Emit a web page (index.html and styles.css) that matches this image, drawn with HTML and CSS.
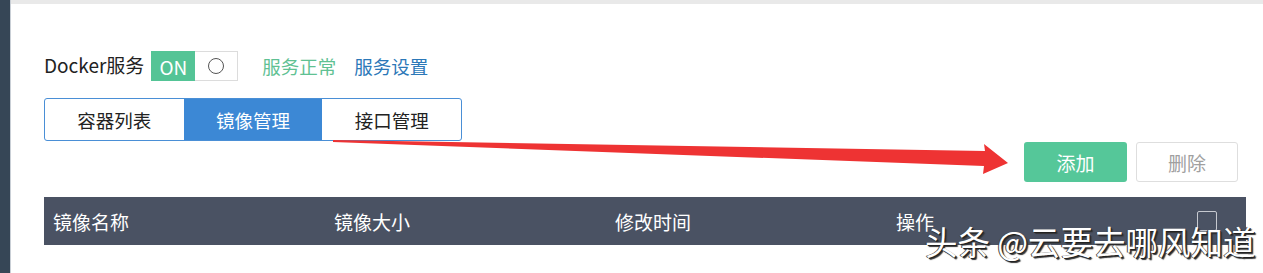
FILE: index.html
```html
<!DOCTYPE html>
<html lang="zh">
<head>
<meta charset="utf-8">
<link rel="stylesheet" href="styles.css">
</head>
<body>
<div class="app">
  <aside class="sidebar"></aside>
  <main class="main">
    <div class="topstrip"></div>
    <div class="content">
      <div class="service-row">
        <span class="label">Docker服务</span>
        <div class="toggle"><span class="on">ON</span><span class="off"><span class="circle"></span></span></div>
        <span class="status">服务正常</span>
        <a class="settings">服务设置</a>
      </div>
      <div class="tabs">
        <div class="tab">容器列表</div>
        <div class="tab active">镜像管理</div>
        <div class="tab">接口管理</div>
      </div>
      <div class="actions">
        <button class="btn btn-add">添加</button>
        <button class="btn btn-del">删除</button>
      </div>
      <div class="thead">
        <div class="th">镜像名称</div>
        <div class="th">镜像大小</div>
        <div class="th">修改时间</div>
        <div class="th">操作</div>
        <div class="th th-check"><span class="checkbox"></span></div>
      </div>
    </div>
  </main>
</div>
<svg class="arrow" width="1263" height="273" viewBox="0 0 1263 273">
  <polygon points="333,140 985,151 984,144 1008,163 983,174 984,166 333,142" fill="#ee3333"/>
</svg>
<div class="watermark">头条 @云要去哪风知道</div>
</body>
</html>
```
FILE: styles.css
```css
html, body {
  margin: 0;
  padding: 0;
  background: #ffffff;
  font-family: "Noto Sans CJK SC", "Noto Sans", sans-serif;
  color: #222;
}
.app {
  display: flex;
  height: 273px;
  overflow: hidden;
}
.sidebar {
  width: 10px;
  flex: none;
  background: #364656;
  border-right: 1px solid #c9cfd6;
}
.main {
  flex: 1;
  display: flex;
  flex-direction: column;
}
.topstrip {
  height: 4px;
  background: #e9e9e9;
}
.content {
  padding: 47px 17px 0 33px;
  display: flex;
  flex-direction: column;
}
.service-row {
  display: flex;
  align-items: center;
  height: 30px;
  font-size: 18.5px;
}
.label {
  color: #222;
  font-size: 19px;
  margin-right: 7px;
  margin-top: -3px;
}
.toggle {
  display: flex;
  height: 30px;
  width: 87px;
  box-sizing: border-box;
  border: 1px solid #dcdcdc;
}
.toggle .on {
  width: 44px;
  background: #54c496;
  color: #fff;
  font-size: 19px;
  display: flex;
  align-items: center;
  justify-content: center;
  margin: -1px 0 -1px -1px;
}
.toggle .off {
  flex: 1;
  display: flex;
  align-items: center;
  justify-content: center;
}
.circle {
  width: 14px;
  height: 14px;
  border: 1px solid #555;
  border-radius: 50%;
}
.status {
  margin-left: 24px;
  color: #5fc193;
}
.settings {
  margin-left: 18px;
  color: #2b78b8;
}
.tabs {
  margin-top: 17px;
  display: flex;
  width: 418px;
  height: 43px;
  box-sizing: border-box;
  border: 1px solid #4a8fd6;
  border-radius: 3px;
  overflow: hidden;
}
.tab {
  flex: 1;
  display: flex;
  align-items: center;
  justify-content: center;
  font-size: 18.5px;
  color: #222;
}
.tab.active {
  background: #3c88d5;
  color: #fff;
}
.actions {
  display: flex;
  justify-content: flex-end;
  gap: 9px;
  margin-right: 8px;
  margin-top: 1px;
}
.btn {
  width: 103px;
  height: 40px;
  font-family: inherit;
  font-size: 19px;
  border-radius: 3px;
  padding: 0;
}
.btn-add {
  background: #55c799;
  color: #fff;
  border: none;
}
.btn-del {
  background: #fff;
  color: #a0a0a0;
  border: 1px solid #dedede;
  width: 102px;
}
.thead {
  margin-top: 15px;
  height: 48px;
  background: #4a5263;
  display: grid;
  grid-template-columns: 281px 281px 281px 281px 1fr;
  align-items: center;
  color: #fff;
  font-size: 19px;
}
.th {
  padding-left: 9px;
}
.th-check {
  padding-left: 0;
  display: flex;
  justify-content: flex-end;
  padding-right: 29px;
}
.checkbox {
  width: 18px;
  height: 18px;
  border: 1px solid #c6c9d0;
  border-radius: 2px;
}
.arrow {
  position: absolute;
  left: 0;
  top: 0;
  pointer-events: none;
}
.watermark {
  position: absolute;
  left: 925px;
  top: 217px;
  font-size: 32.5px;
  color: #fff;
  white-space: nowrap;
  text-shadow: 1px 1px 0 #222, -1px 0 0 #444, 2px 2px 1px #333;
  font-family: "Noto Sans CJK SC", sans-serif;
}
```
